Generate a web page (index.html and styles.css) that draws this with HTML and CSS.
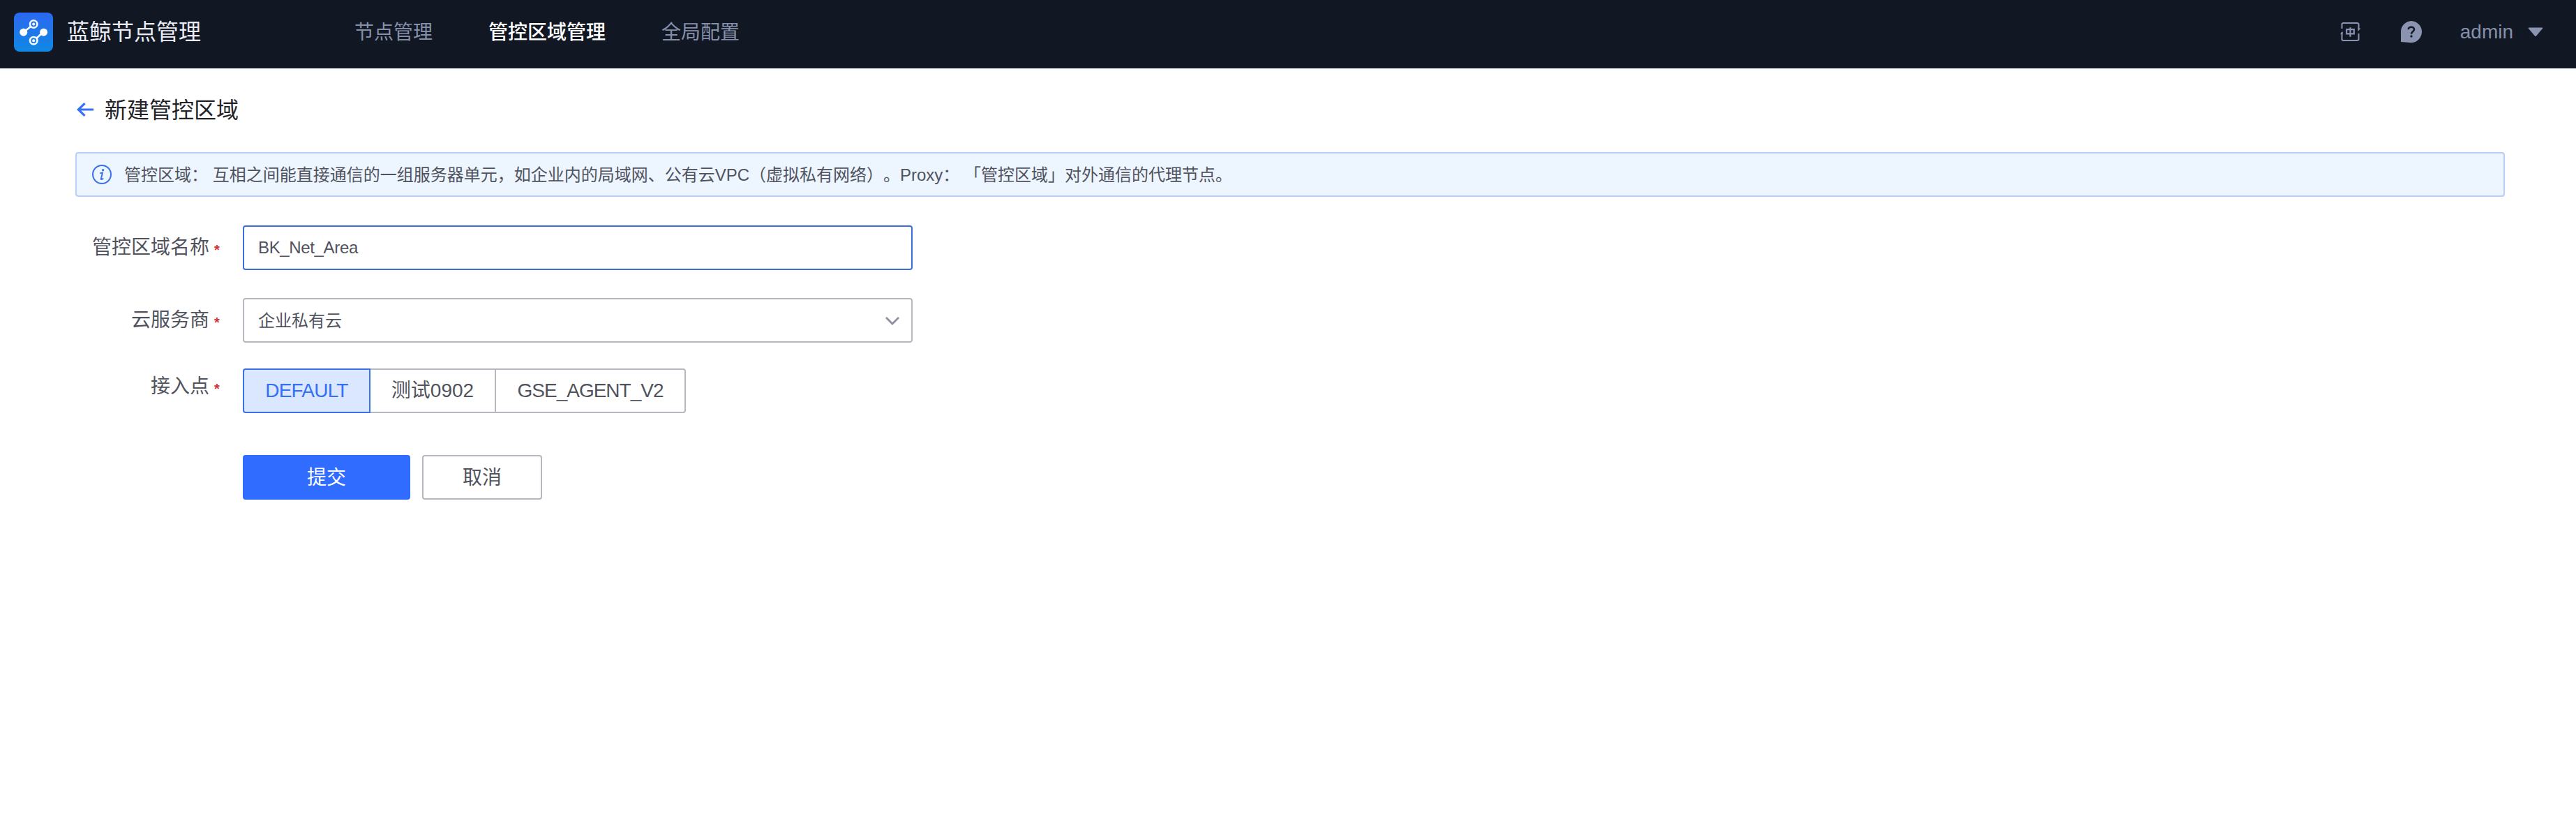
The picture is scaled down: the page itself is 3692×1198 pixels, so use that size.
FILE: index.html
```html
<!DOCTYPE html>
<html lang="zh-CN">
<head>
<meta charset="utf-8">
<title>蓝鲸节点管理</title>
<link rel="stylesheet" href="styles.css">
</head>
<body>
<header class="header">
  <svg class="logo" viewBox="0 0 56 56">
    <defs><linearGradient id="lg" x1="0" y1="0" x2="0" y2="1"><stop offset="0" stop-color="#2b68f0"/><stop offset="1" stop-color="#1088e4"/></linearGradient></defs>
    <rect width="56" height="56" rx="8" fill="url(#lg)"/>
    <g stroke="#fff" stroke-width="2.6" fill="none"><path d="M14 28 24 20M42 28 32 37"/><circle cx="28.2" cy="16.5" r="5.2"/><circle cx="28.2" cy="40.2" r="5.2"/></g>
    <g fill="#fff"><circle cx="13.7" cy="28.2" r="5.5"/><circle cx="42.6" cy="28.2" r="5.5"/><circle cx="28.2" cy="16.5" r="2"/><circle cx="28.2" cy="40.2" r="2"/></g>
  </svg>
  <span class="brand">蓝鲸节点管理</span>
  <nav class="nav">
    <a class="nav-item">节点管理</a>
    <a class="nav-item active">管控区域管理</a>
    <a class="nav-item">全局配置</a>
  </nav>
  <div class="tools">
    <svg class="lang" viewBox="0 0 30 28" fill="none" stroke="#8a94b0" stroke-width="2"><path d="M2.5 9V3.2Q2.5 1 4.7 1H24.3Q26.5 1 26.5 3.2V10M2.5 14V24.3Q2.5 26 4.7 26H24.3Q26.5 26 26.5 24.3V16"/><path fill="#8a94b0" stroke="none" d="M25.5 8.5H29.5L25.5 13ZM3.5 18V13L0 17H3.5Z"/><path stroke-width="2.2" d="M9.2 10.2h10.6v6.2H9.200zM14.500 7.200v13.600"/></svg>
    <svg class="help" viewBox="0 0 32 32"><path fill="#8a94b0" d="M16 0A15.6 15.6 0 1 1 13 31L1 30V17A15.6 15.6 0 0 1 16 0Z"/><path d="M11.8 12.3C11.8 7.5 20 7.6 20 12.2 20 15.3 16 15.2 16 18.8" fill="none" stroke="#121823" stroke-width="2.6"/><circle cx="16" cy="22" r="1.7" fill="#121823"/></svg>
    <span class="user">admin</span>
    <svg class="caret" viewBox="0 0 22 14"><path d="M1.5.5H20.5Q22 .5 21 2L12 12.4Q11 13.5 10 12.4L1 2Q0 .5 1.5.5Z" fill="#8a94b0"/></svg>
  </div>
</header>
<main class="page">
  <div class="title-row">
    <svg class="back" viewBox="0 0 24 20" fill="none" stroke="#3570f5" stroke-width="3.2"><path d="M24 10H2M11.500 1.200 2.300 10 11.500 18.800"/></svg>
    <h1 class="title">新建管控区域</h1>
  </div>
  <div class="alert">
    <svg class="info" viewBox="0 0 28 28"><circle cx="14" cy="14" r="13" fill="none" stroke="#3a70e8" stroke-width="2"/><circle cx="15.6" cy="7.8" r="1.7" fill="#3a70e8"/><path d="M11.3 12.2 15 11.6 12.8 20.2Q12.4 22.2 16.3 19.6" fill="none" stroke="#3a70e8" stroke-width="1.9"/></svg>
    <span class="alert-text">管控区域： 互相之间能直接通信的一组服务器单元，如企业内的局域网、公有云VPC（虚拟私有网络）。Proxy： 「管控区域」对外通信的代理节点。</span>
  </div>
  <form class="form">
    <div class="row row-name"><label class="label">管控区域名称<i class="star">*</i></label><div class="field focus">BK_Net_Area</div></div>
    <div class="row row-vendor"><label class="label">云服务商<i class="star">*</i></label><div class="field"><span class="value">企业私有云</span><svg class="chevron" viewBox="0 0 20 12" fill="none" stroke="#8d909c" stroke-width="2.8"><path d="M1 1 10 10 19 1"/></svg></div></div>
    <div class="row row-ap"><label class="label label-up">接入点<i class="star">*</i></label><div class="group"><span class="opt opt-default">DEFAULT</span><span class="opt opt-test">测试0902</span><span class="opt opt-gse">GSE_AGENT_V2</span></div></div>
    <div class="actions"><button type="button" class="btn primary">提交</button><button type="button" class="btn">取消</button></div>
  </form>
</main>
</body>
</html>
```
FILE: styles.css
```css
* { box-sizing: border-box; }
body {
  margin: 0;
  background: #fff;
  color: #50535e;
  font-family: "Liberation Sans", "Noto Sans CJK SC", sans-serif;
  font-size: 24px;
  line-height: 36px;
  text-spacing-trim: space-all;
}
svg { display: block; flex: none; }
.header {
  display: flex;
  align-items: center;
  height: 98px;
  padding: 0 47px 6px 20px;
  background: #121823;
}
.logo { width: 56px; height: 56px; }
.brand { width: 412px; padding-left: 20px; font-size: 32px; line-height: 48px; color: #eaebf5; }
.nav { display: flex; gap: 80px; padding: 2px 0 0 20px; }
.nav-item { font-size: 28px; line-height: 42px; color: #8690ab; }
.nav-item.active { color: #fff; font-weight: 500; }
.tools { display: flex; align-items: center; margin-left: auto; color: #8690ab; }
.lang { width: 30px; height: 28px; }
.help { width: 32px; height: 32px; margin-left: 56px; }
.user { margin-left: 54px; font-size: 28px; line-height: 40px; }
.caret { width: 22px; height: 14px; margin-left: 21px; }
.page { padding: 34px 102px 0 108px; }
.title-row { display: flex; align-items: center; height: 50px; padding-left: 2px; }
.back { width: 24px; height: 20px; }
.title { margin: 0 0 0 16px; padding-top: 2px; font-size: 32px; font-weight: 400; line-height: 48px; color: #222329; }
.alert {
  display: flex;
  align-items: center;
  height: 64px;
  margin-top: 36px;
  padding-left: 22px;
  border: 2px solid #b9cff7;
  border-radius: 4px;
  background: #edf5ff;
}
.alert-text { padding-top: 2px; }
.info { width: 28px; height: 28px; margin-right: 18px; }
.form { padding-top: 41px; }
.row { display: flex; height: 64px; }
.row-vendor { margin-top: 40px; }
.row-ap { margin-top: 37px; }
.label {
  display: flex;
  justify-content: flex-end;
  width: 240px;
  padding-right: 33px;
  font-size: 28px;
  line-height: 64px;
}
.label-up { line-height: 52px; }
.star {
  width: 8px;
  margin-left: 7px;
  padding-top: 3px;
  font-size: 20px;
  font-style: normal;
  font-weight: 700;
  color: #d82f36;
}
.field {
  display: flex;
  align-items: center;
  justify-content: space-between;
  width: 960px;
  padding: 0 17px 0 20px;
  border: 2px solid #b6b8c0;
  border-radius: 4px;
}
.field.focus { border-color: #3c6fd8; letter-spacing: -0.35px; }
.value { padding-top: 2px; }
.chevron { width: 20px; height: 12px; margin-top: 2px; }
.group { display: flex; font-size: 28px; }
.opt {
  display: flex;
  align-items: center;
  justify-content: center;
  border: 2px solid #b6b8c0;
  border-left-width: 0;
}
.opt-default {
  width: 183px;
  border: 2px solid #3a70e8;
  border-radius: 4px 0 0 4px;
  background: #dbe6ff;
  color: #3370f6;
  letter-spacing: -0.8px;
}
.opt-test { width: 180px; }
.opt-gse { width: 272px; border-radius: 0 4px 4px 0; letter-spacing: -1px; }
.actions { display: flex; gap: 17px; margin-top: 60px; padding-left: 240px; }
.btn {
  width: 172px;
  height: 64px;
  padding: 2px 0 0;
  border: 2px solid #b6b8c0;
  border-radius: 4px;
  background: #fff;
  color: #50535e;
  font: 28px/40px "Liberation Sans", "Noto Sans CJK SC", sans-serif;
}
.btn.primary { width: 240px; border-color: #2f6cff; background: #2f6cff; color: #fff; }
```
